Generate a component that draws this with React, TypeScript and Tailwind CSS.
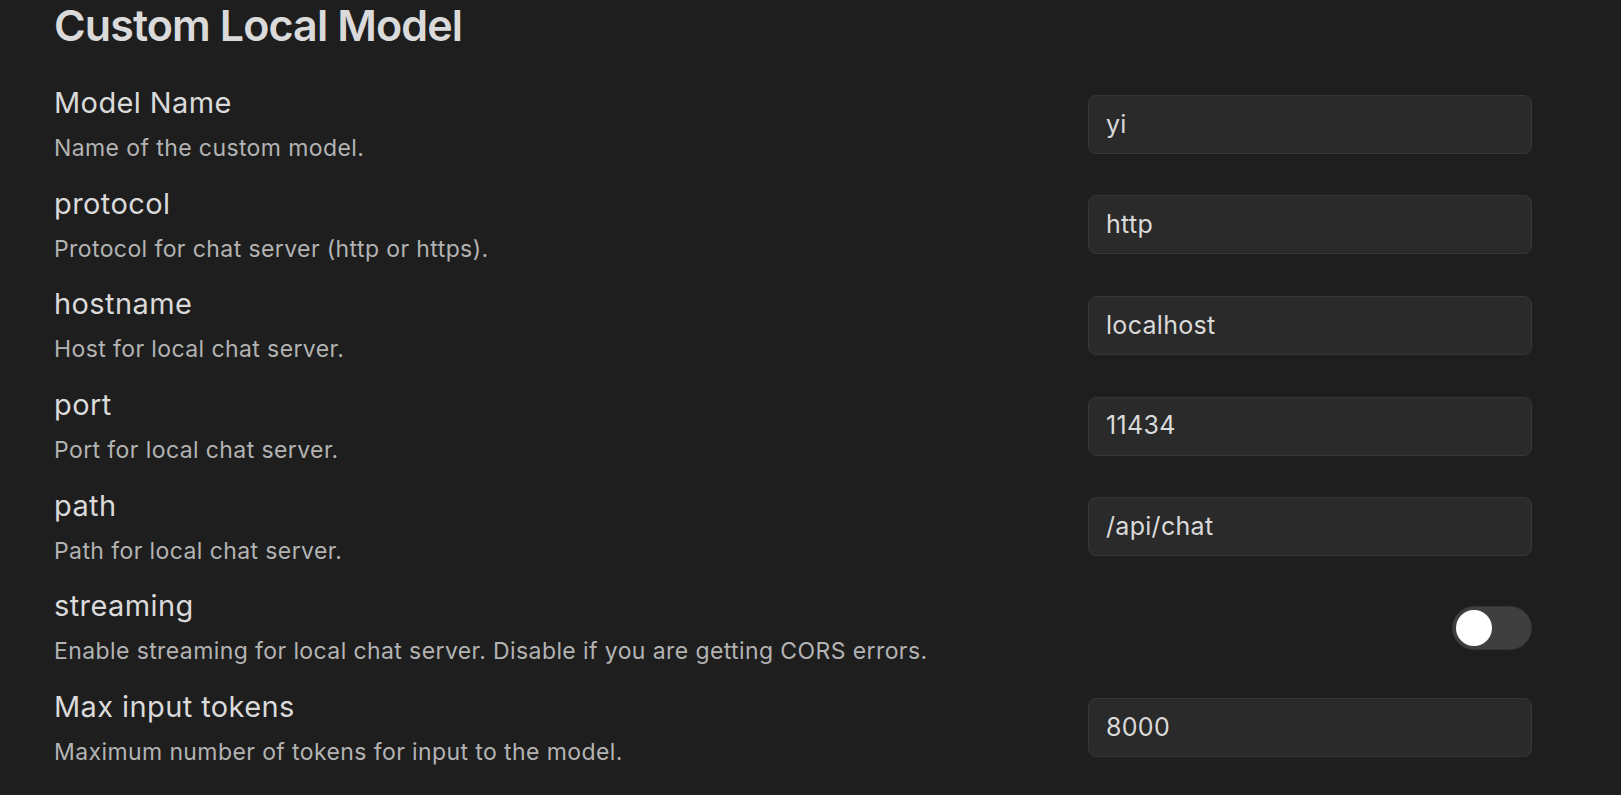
import React from "react";

type Row = { name: string; desc: string; value?: string; toggle?: boolean };

const rows: Row[] = [
  { name: "Model Name", desc: "Name of the custom model.", value: "yi" },
  { name: "protocol", desc: "Protocol for chat server (http or https).", value: "http" },
  { name: "hostname", desc: "Host for local chat server.", value: "localhost" },
  { name: "port", desc: "Port for local chat server.", value: "11434" },
  { name: "path", desc: "Path for local chat server.", value: "/api/chat" },
  {
    name: "streaming",
    desc: "Enable streaming for local chat server. Disable if you are getting CORS errors.",
    toggle: true,
  },
  { name: "Max input tokens", desc: "Maximum number of tokens for input to the model.", value: "8000" },
];

export default function App() {
  return (
    <div
      className="w-[1621px] h-[795px] overflow-hidden bg-[#1e1e1e] pl-[54px] pr-[89px]"
      style={{ fontFamily: "Inter, 'Noto Sans', sans-serif" }}
    >
      <h1 className="mt-[-1px] text-[43px] leading-[52px] font-semibold text-[#dadada] tracking-[-0.9px]">
        Custom Local Model
      </h1>
      <div className="mt-[23px]">
        {rows.map((r) => (
          <div key={r.name} className="flex items-center h-[100.6px]">
            <div className="flex-1 min-w-0">
              <div className="text-[29px] leading-[40px] text-[#dadada] tracking-[0.4px]">{r.name}</div>
              <div className="mt-[8px] text-[23px] leading-[34px] text-[#b3b3b3] tracking-[0.4px]">{r.desc}</div>
            </div>
            <div className="w-[444px] flex justify-end">
              {r.toggle ? (
                <div className="mt-[2px] w-[80px] h-[44px] rounded-full bg-[#3f3f3f] border border-[#353535] flex items-center pl-[3px]">
                  <div className="w-[36px] h-[36px] rounded-full bg-white" />
                </div>
              ) : (
                <div className="w-[444px] h-[59px] rounded-[8px] bg-[#2a2a2a] border-[1.5px] border-[#363636] flex items-center pl-[17px] text-[25px] text-[#dadada] tracking-[0.3px]">
                  {r.value}
                </div>
              )}
            </div>
          </div>
        ))}
      </div>
    </div>
  );
}
